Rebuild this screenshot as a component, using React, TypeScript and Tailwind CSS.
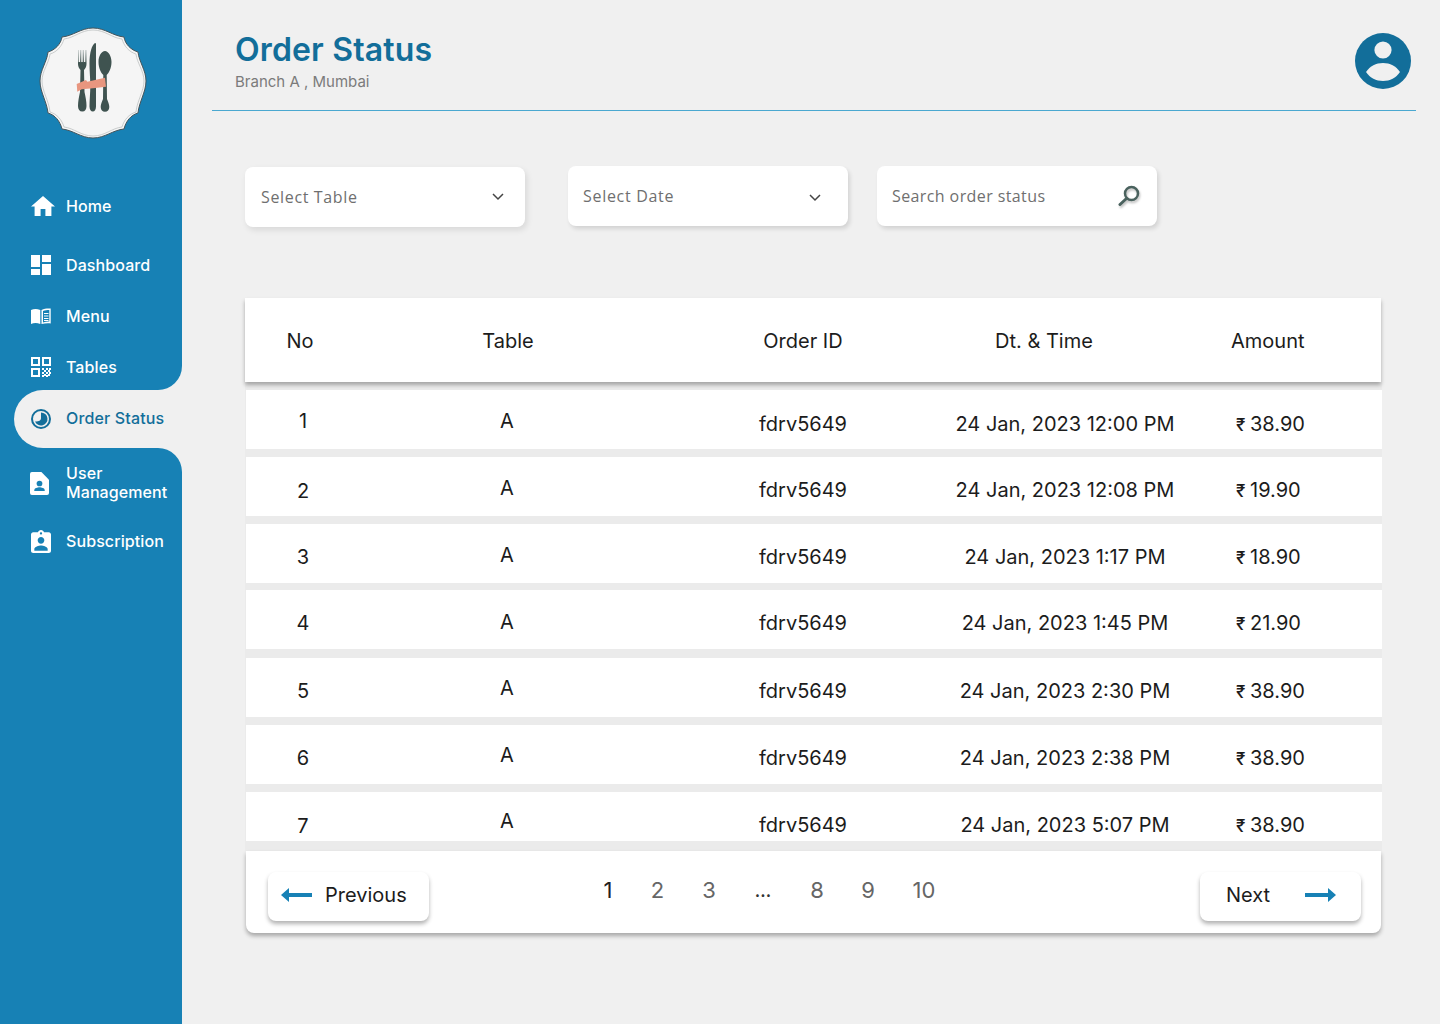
const orders = [
  { no: '1', table: 'A', date: '24 Jan, 2023 12:00 PM', amount: '38.90', gap: 'mt-0 h-[59px]', noTop: 'pt-[17px]', tableTop: 'pt-[17px]', restTop: 'pt-5' },
  { no: '2', table: 'A', date: '24 Jan, 2023 12:08 PM', amount: '19.90', gap: 'mt-2 h-[59px]', noTop: 'pt-5', tableTop: 'pt-[17px]', restTop: 'pt-[19px]' },
  { no: '3', table: 'A', date: '24 Jan, 2023 1:17 PM', amount: '18.90', gap: 'mt-2 h-[59px]', noTop: 'pt-[19px]', tableTop: 'pt-[17px]', restTop: 'pt-[19px]' },
  { no: '4', table: 'A', date: '24 Jan, 2023 1:45 PM', amount: '21.90', gap: 'mt-[7px] h-[59px]', noTop: 'pt-[19px]', tableTop: 'pt-[18px]', restTop: 'pt-[19px]' },
  { no: '5', table: 'A', date: '24 Jan, 2023 2:30 PM', amount: '38.90', gap: 'mt-[9px] h-[59px]', noTop: 'pt-[19px]', tableTop: 'pt-4', restTop: 'pt-[19px]' },
  { no: '6', table: 'A', date: '24 Jan, 2023 2:38 PM', amount: '38.90', gap: 'mt-2 h-[59px]', noTop: 'pt-[19px]', tableTop: 'pt-4', restTop: 'pt-[19px]' },
  { no: '7', table: 'A', date: '24 Jan, 2023 5:07 PM', amount: '38.90', gap: 'mt-2 h-[49px]', noTop: 'pt-5', tableTop: 'pt-[15px]', restTop: 'pt-[19px]' },
]

const pages = [
  { label: '1', className: 'w-[52px] text-[#222]' },
  { label: '2', className: 'w-[47px]' },
  { label: '3', className: 'w-14' },
  { label: '...', className: 'w-[52px] pt-1 text-[17px] font-semibold text-[#333]' },
  { label: '8', className: 'w-14' },
  { label: '9', className: 'w-[46px]' },
  { label: '10', className: 'w-[66px]' },
]

function Logo() {
  return (
    <svg viewBox="38 26 110 114" className="h-[114px] w-[110px]">
      <defs>
        <linearGradient id="tines" gradientUnits="userSpaceOnUse" x1="0" y1="50" x2="0" y2="63">
          <stop offset="0" stopColor="#c4cac9" />
          <stop offset="1" stopColor="#3f5350" />
        </linearGradient>
      </defs>
      <path
        d="M93 28C105 28 113 36 124 37C125 44 131 50 138 52C139 62 146 70 146 81C146 92 139 102 138 113C131 115 126 121 124 129C113 130 105 138 93 138C81 138 73 130 62 129C60 121 55 115 48 113C47 102 40 92 40 81C40 70 47 62 48 52C55 50 61 44 62 37C73 36 81 28 93 28Z"
        fill="#f5f5f5"
        stroke="#44545a"
        strokeWidth="1"
      />
      <path
        d="M93 30C105 30 112 38 122 39C124 46 129 52 136 54C137 63 144 71 144 81C144 91 137 101 136 112C129 114 124 120 122 127C112 128 105 136 93 136C81 136 74 128 64 127C62 120 57 114 50 112C49 101 42 91 42 81C42 71 49 63 50 54C57 52 62 46 64 39C74 38 81 30 93 30Z"
        fill="none"
        stroke="#b8bcbc"
        strokeWidth="0.7"
      />
      <path
        d="M78 50v14c0 3 1.500 5 2.500 6l-.5 22c-1 5-2 9-2 14 0 3.500 1.500 5.500 4.300 5.500s4.200-2 4.200-5.500c0-5-1-9-2-14l-.5-22c1-1 2.500-3 2.500-6V50h-1.200v12h-1.400V50h-1.200v12h-1.400V50h-1.200v12h-1.400V50z"
        fill="url(#tines)"
      />
      <path d="M95 43c-3 2-5.500 9-5.500 20.500 0 8 .8 14 .8 22 0 8-.8 14-.8 21 0 3 1.500 5 3.300 5s3.200-2 3.200-5V44c0-.5-.5-1-1-1z" fill="#3f5350" />
      <path d="M105 51c-3.600 0-6.500 5-6.500 11 0 6 2.500 11 4.800 13l-.3 24c-1 3-2.300 5-2.300 8 0 3 1.800 4.800 4.300 4.800s4.300-1.800 4.300-4.800c0-3-1.300-5-2.300-8l-.3-24c2.300-2 4.800-7 4.800-13 0-6-3.200-11-6.500-11z" fill="#3f5350" />
      <path d="M76.700 84l9.300-4 1.300 1.700 17.700-4 1 9-13 1.600-11.300 1-4.400 2.400z" fill="#e8967f" />
    </svg>
  )
}

function NavText({ children }: { children: React.ReactNode }) {
  return <span className="text-base leading-[19px] font-medium tracking-[0.1px] text-white">{children}</span>
}

function HomeIcon() {
  return (
    <svg viewBox="2 3 20 17" className="h-5 w-6" fill="white" preserveAspectRatio="none">
      <path d="M10 20v-6h4v6h5v-8h3L12 3 2 12h3v8z" />
    </svg>
  )
}

function DashboardIcon() {
  return (
    <svg viewBox="0 0 20 20" className="h-5 w-5" fill="white">
      <rect x="0" y="0" width="9" height="12" />
      <rect x="11" y="0" width="9" height="7" />
      <rect x="0" y="14" width="9" height="6" />
      <rect x="11" y="9" width="9" height="11" />
    </svg>
  )
}

function MenuIcon() {
  return (
    <svg viewBox="0 0 20 16" className="h-4 w-5" fill="white">
      <path d="M0 2c3-1.500 6-1.500 9.300 0v14C6 14.800 3 14.800 0 16z" />
      <path d="M10.500 2c3-1.500 6-1.800 9.200-1.500V15.500c-3.200-.5-6.200 0-9.200.5zM12 3v11.500c2.200-.7 4.500-1 6.300-.9V2c-2.200 0-4.300.2-6.300 1z" />
      <path d="M13 5h4.500v1H13zM13 7.500h4.500v1H13zM13 10h4.500v1H13zM13 12h4.500v1H13z" />
    </svg>
  )
}

function TablesIcon() {
  return (
    <svg viewBox="0 0 20 20" className="h-5 w-5" fill="white">
      <path fillRule="evenodd" d="M0 0h9v9H0zM2 2v5h5V2zM11 0h9v9h-9zM13 2v5h5V2zM0 11h9v9H0zM2 13v5h5v-5z" />
      <path d="M11 11h2v2h-2zM15 11h2v2h-2zM18 11h2v2h-2zM13 13h2v2h-2zM17 13h2v2h-2zM11 15h2v2h-2zM15 15h2v2h-2zM18 15h2v2h-2zM13 17h2v2h-2zM17 17h2v2h-2zM11 18h2v2h-2zM15 18h2v2h-2z" />
    </svg>
  )
}

function OrderIcon() {
  return (
    <svg viewBox="0 0 20 20" className="h-5 w-5">
      <circle cx="10" cy="10" r="9" fill="none" stroke="#126e9a" strokeWidth="2" />
      <path d="M10 3.500a6.500 6.500 0 1 1-6 9c3 .5 6-1 6-3z" fill="#126e9a" />
    </svg>
  )
}

function UserFileIcon() {
  return (
    <svg viewBox="0 0 20 24" className="h-[23px] w-[19px]">
      <path d="M2 0h10l8 8v14a2 2 0 0 1-2 2H2a2 2 0 0 1-2-2V2a2 2 0 0 1 2-2z" fill="white" />
      <circle cx="10" cy="12" r="3" fill="#1781b5" />
      <path d="M4.500 20v-1c0-2 3.500-3 5.500-3s5.500 1 5.500 3v1z" fill="#1781b5" />
    </svg>
  )
}

function SubscriptionIcon() {
  return (
    <svg viewBox="3 1 18 20" className="h-[23px] w-5" fill="white" preserveAspectRatio="none">
      <path d="M19 3h-4.180C14.400 1.840 13.300 1 12 1c-1.300 0-2.400.84-2.820 2H5c-1.100 0-2 .9-2 2v14c0 1.100.9 2 2 2h14c1.100 0 2-.9 2-2V5c0-1.100-.9-2-2-2zm-7 0c.55 0 1 .45 1 1s-.45 1-1 1-1-.45-1-1 .45-1 1-1zm0 4c1.660 0 3 1.340 3 3s-1.340 3-3 3-3-1.340-3-3 1.340-3 3-3zm6 12H6v-1.400c0-2 4-3.100 6-3.100s6 1.100 6 3.100V19z" />
    </svg>
  )
}

function Chevron() {
  return (
    <svg viewBox="0 0 12 8" className="h-2 w-3" fill="none" stroke="#444" strokeWidth="1.500">
      <path d="M1 1l5 5 5-5" />
    </svg>
  )
}

function Sidebar() {
  return (
    <aside className="flex h-full w-[182px] shrink-0 flex-col">
      <div className="rounded-br-3xl bg-[#1781b5] pb-[11px]">
        <div className="flex justify-center pt-[26px] pl-1">
          <Logo />
        </div>
        <div className="mt-[54px] flex h-6 items-center pl-[31px]">
          <div className="w-[35px]"><HomeIcon /></div>
          <NavText>Home</NavText>
        </div>
        <div className="mt-[35px] flex h-6 items-center pl-[31px]">
          <div className="w-[35px]"><DashboardIcon /></div>
          <NavText>Dashboard</NavText>
        </div>
        <div className="mt-[27px] flex h-6 items-center pl-[31px]">
          <div className="w-[35px]"><MenuIcon /></div>
          <NavText>Menu</NavText>
        </div>
        <div className="mt-[27px] flex h-6 items-center pl-[31px]">
          <div className="w-[35px]"><TablesIcon /></div>
          <NavText>Tables</NavText>
        </div>
      </div>
      <div className="bg-[#1781b5] pl-[14px]">
        <div className="flex h-[58px] items-center rounded-l-[29px] bg-[#f0f0f0] pl-[17px]">
          <div className="w-[35px]"><OrderIcon /></div>
          <span className="pb-0.5 text-base leading-[19px] font-medium tracking-[0.15px] text-[#126e9a]">Order Status</span>
        </div>
      </div>
      <div className="flex-1 rounded-tr-3xl bg-[#1781b5] pt-4">
        <div className="flex items-center pl-[30px]">
          <div className="w-9"><UserFileIcon /></div>
          <NavText>User<br />Management</NavText>
        </div>
        <div className="mt-[27px] flex h-6 items-center pl-[31px]">
          <div className="w-[35px]"><SubscriptionIcon /></div>
          <NavText>Subscription</NavText>
        </div>
      </div>
    </aside>
  )
}

function Filters() {
  return (
    <div className="ml-[63px] flex items-start pt-[55px] font-['Open_Sans',sans-serif] text-base text-[#6f6f6f]">
      <div className="mt-px flex h-[60px] w-[280px] items-center justify-between rounded-lg bg-white pr-[21px] pl-4 shadow-[2px_3px_6px_rgba(0,0,0,0.1)]">
        <span className="tracking-[0.65px]">Select Table</span>
        <Chevron />
      </div>
      <div className="ml-[43px] flex h-[60px] w-[280px] items-center justify-between rounded-lg bg-white pr-[27px] pl-[15px] shadow-[2px_3px_4px_rgba(0,0,0,0.12)]">
        <span className="tracking-[0.7px]">Select Date</span>
        <div className="pt-1"><Chevron /></div>
      </div>
      <div className="ml-[29px] flex h-[60px] w-[280px] items-center justify-between rounded-lg bg-white pr-4 pl-[15px] shadow-[2px_3px_4px_rgba(0,0,0,0.12)]">
        <span className="tracking-[0.4px]">Search order status</span>
        <svg viewBox="0 0 24 24" className="h-6 w-6 drop-shadow-[1px_2px_1px_rgba(0,0,0,0.25)]" fill="none" stroke="#4a625e">
          <circle cx="14.500" cy="9.500" r="6.500" strokeWidth="2.500" />
          <path d="M9.500 14.500L3 20.500" strokeWidth="3" strokeLinecap="round" />
        </svg>
      </div>
    </div>
  )
}

function Arrow({ flip }: { flip?: boolean }) {
  return (
    <svg viewBox="0 0 32 14" className={flip ? 'h-[14px] w-8 rotate-180' : 'h-[14px] w-8'} fill="#1781b5">
      <path d="M0 5h23V0l8 7-8 7V9H0z" />
    </svg>
  )
}

function OrdersTable() {
  return (
    <div className="mt-[71px] ml-[63px] w-[1137px] text-xl text-[#1c1c1c]">
      <div className="relative z-10 grid h-[84px] w-[1136px] grid-cols-[110px_306px_284px_198px_1fr] items-center bg-white pt-0.5 text-center shadow-[0_3px_4px_rgba(0,0,0,0.3)]">
        <span>No</span>
        <span>Table</span>
        <span>Order ID</span>
        <span>Dt. &amp; Time</span>
        <span className="pl-[88px] text-left">Amount</span>
      </div>
      <div className="h-[469px] overflow-hidden bg-[#ebebeb] pt-2 pl-px">
        {orders.map((order) => (
          <div key={order.no} className={`grid grid-cols-[114px_294px_298px_226px_1fr] overflow-hidden bg-white text-center ${order.gap}`}>
            <span className={order.noTop}>{order.no}</span>
            <span className={order.tableTop}>{order.table}</span>
            <span className={order.restTop}>fdrv5649</span>
            <span className={order.restTop}>{order.date}</span>
            <span className={`pl-[58px] text-left ${order.restTop}`}>
              <span className="inline-block w-[14px] text-[17px] font-medium">₹</span>
              {order.amount}
            </span>
          </div>
        ))}
      </div>
      <div className="ml-px flex h-[82px] w-[1135px] rounded-b-lg bg-white pt-[21px] pl-[22px] shadow-[0_3px_4px_rgba(0,0,0,0.3)]">
        <button className="flex h-[49px] w-[161px] items-center rounded-lg bg-white pb-[3px] pl-3 shadow-[0_3px_4px_rgba(0,0,0,0.3)]">
          <Arrow flip />
          <span className="ml-[13px]">Previous</span>
        </button>
        <div className="ml-[153px] flex h-9 items-center text-center text-[22px] text-[#666]">
          {pages.map((page) => (
            <span key={page.label} className={page.className}>{page.label}</span>
          ))}
        </div>
        <button className="mr-5 ml-auto flex h-[49px] w-[161px] items-center rounded-lg bg-white pb-[3px] pl-[26px] shadow-[0_3px_4px_rgba(0,0,0,0.3)]">
          <span className="w-[79px] text-left">Next</span>
          <Arrow />
        </button>
      </div>
    </div>
  )
}

export default function App() {
  return (
    <div className="flex h-[1024px] w-[1440px] overflow-hidden bg-[#f0f0f0] font-['Inter',sans-serif]">
      <Sidebar />
      <main className="flex-1">
        <header className="mr-6 ml-[30px] flex h-[111px] items-start justify-between border-b border-[#4aa8d0] pt-[31px] pr-[5px] pl-[23px]">
          <div>
            <h1 className="text-[32px] leading-[38px] font-semibold tracking-[0.16px] text-[#126e9a]">Order Status</h1>
            <p className="mt-[3px] text-[15px] leading-5 text-[#7b7b7b]">Branch A , Mumbai</p>
          </div>
          <svg viewBox="0 0 56 56" className="mt-0.5 h-14 w-14">
            <circle cx="28" cy="28" r="28" fill="#126e9a" />
            <circle cx="28" cy="17" r="8.600" fill="#f0f0f0" />
            <path d="M11 39C15 33 21 30 28 30S41 33 45 39C41 45 35 48 28 48S15 45 11 39Z" fill="#f0f0f0" />
          </svg>
        </header>
        <Filters />
        <OrdersTable />
      </main>
    </div>
  )
}
